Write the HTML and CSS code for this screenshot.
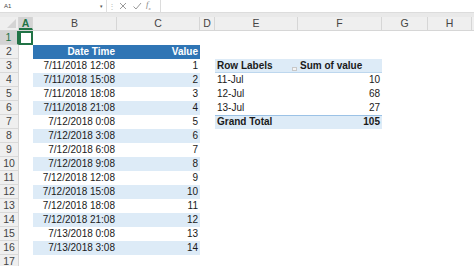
FILE: index.html
```html
<!DOCTYPE html>
<html>
<head>
<meta charset="utf-8">
<link rel="stylesheet" href="styles.css">
</head>
<body>
<div class="fbar">
  <div class="namebox"><span>A1</span><span class="dd">&#9662;</span></div>
  <div class="sep">&#8942;</div>
  <div class="icons">
    <svg width="10" height="10" viewBox="0 0 10 10"><path d="M2 2 L8 8 M8 2 L2 8" stroke="#9a9a9a" stroke-width="1"/></svg>
    <svg width="10" height="10" viewBox="0 0 10 10"><path d="M1.5 5.5 L4 8 L9 2" stroke="#9a9a9a" stroke-width="1" fill="none"/></svg>
    <span class="fx">f<sub>x</sub></span>
  </div>
  <div class="finput"></div>
</div>
<div class="gap"></div>
<div class="sheet">
  <div class="row hdr"><div class="corner"><span class="tri"></span></div><div class="ch act">A</div><div class="ch">B</div><div class="ch">C</div><div class="ch">D</div><div class="ch">E</div><div class="ch">F</div><div class="ch">G</div><div class="ch">H</div><div class="ch last"></div></div>
  <div class="row"><div class="rh act">1</div><div class="sel"></div><div></div><div></div><div></div><div></div><div></div><div></div><div></div><div></div></div>
  <div class="row"><div class="rh">2</div><div></div><div class="th">Date Time</div><div class="th">Value</div><div></div><div></div><div></div><div></div><div></div><div></div></div>
  <div class="row"><div class="rh">3</div><div></div><div class="num">7/11/2018 12:08</div><div class="num">1</div><div></div><div class="ph">Row Labels<span class="filt"></span></div><div class="ph">Sum of value</div><div></div><div></div><div></div></div>
  <div class="row"><div class="rh">4</div><div></div><div class="num band">7/11/2018 15:08</div><div class="num band">2</div><div></div><div class="pl">11-Jul</div><div class="num pv">10</div><div></div><div></div><div></div></div>
  <div class="row"><div class="rh">5</div><div></div><div class="num">7/11/2018 18:08</div><div class="num">3</div><div></div><div class="pl">12-Jul</div><div class="num pv">68</div><div></div><div></div><div></div></div>
  <div class="row"><div class="rh">6</div><div></div><div class="num band">7/11/2018 21:08</div><div class="num band">4</div><div></div><div class="pl">13-Jul</div><div class="num pv">27</div><div></div><div></div><div></div></div>
  <div class="row"><div class="rh">7</div><div></div><div class="num">7/12/2018 0:08</div><div class="num">5</div><div></div><div class="gt">Grand Total</div><div class="gt num">105</div><div></div><div></div><div></div></div>
  <div class="row"><div class="rh">8</div><div></div><div class="num band">7/12/2018 3:08</div><div class="num band">6</div><div></div><div></div><div></div><div></div><div></div><div></div></div>
  <div class="row"><div class="rh">9</div><div></div><div class="num">7/12/2018 6:08</div><div class="num">7</div><div></div><div></div><div></div><div></div><div></div><div></div></div>
  <div class="row"><div class="rh">10</div><div></div><div class="num band">7/12/2018 9:08</div><div class="num band">8</div><div></div><div></div><div></div><div></div><div></div><div></div></div>
  <div class="row"><div class="rh">11</div><div></div><div class="num">7/12/2018 12:08</div><div class="num">9</div><div></div><div></div><div></div><div></div><div></div><div></div></div>
  <div class="row"><div class="rh">12</div><div></div><div class="num band">7/12/2018 15:08</div><div class="num band">10</div><div></div><div></div><div></div><div></div><div></div><div></div></div>
  <div class="row"><div class="rh">13</div><div></div><div class="num">7/12/2018 18:08</div><div class="num">11</div><div></div><div></div><div></div><div></div><div></div><div></div></div>
  <div class="row"><div class="rh">14</div><div></div><div class="num band">7/12/2018 21:08</div><div class="num band">12</div><div></div><div></div><div></div><div></div><div></div><div></div></div>
  <div class="row"><div class="rh">15</div><div></div><div class="num">7/13/2018 0:08</div><div class="num">13</div><div></div><div></div><div></div><div></div><div></div><div></div></div>
  <div class="row"><div class="rh">16</div><div></div><div class="num band">7/13/2018 3:08</div><div class="num band">14</div><div></div><div></div><div></div><div></div><div></div><div></div></div>
  <div class="row"><div class="rh">17</div><div></div><div></div><div></div><div></div><div></div><div></div><div></div><div></div><div></div></div>
</div>
</body>
</html>
```

FILE: styles.css
```css
html, body {
  margin: 0;
  padding: 0;
  background: #ffffff;
  width: 474px;
  height: 266px;
  overflow: hidden;
  font-family: "Liberation Sans", Arial, sans-serif;
  font-size: 10px;
  color: #1a1a1a;
}

.fbar {
  display: flex;
  align-items: center;
  height: 13px;
  background: #ffffff;
  border-bottom: 1px solid #dcdcdc;
  box-sizing: border-box;
}

.namebox {
  width: 107px;
  height: 13px;
  display: flex;
  align-items: center;
  justify-content: space-between;
  padding: 0 3px 0 4px;
  box-sizing: border-box;
  font-size: 6px;
  color: #444;
  border-right: 1px solid #e0e0e0;
}

.namebox .dd {
  font-size: 5px;
  color: #555;
}

.sep {
  width: 10px;
  text-align: center;
  color: #bbb;
  font-size: 8px;
}

.icons {
  display: flex;
  align-items: center;
  gap: 4px;
  width: 42px;
  padding-left: 1px;
}

.fx {
  font-family: "Liberation Serif", serif;
  font-style: italic;
  font-size: 9px;
  color: #888;
  line-height: 10px;
}

.fx sub {
  font-size: 5px;
}

.finput {
  flex: 1;
  height: 13px;
  border-left: 1px solid #dcdcdc;
}

.gap {
  height: 4px;
  background: #e9e9e9;
}

.sheet {
  display: flex;
  flex-direction: column;
}

.row {
  display: grid;
  grid-template-columns: 19px 14px 84px 83px 15px 83px 84px 46px 44px 1fr;
  height: 14px;
  line-height: 14px;
}

.row > div {
  white-space: nowrap;
  overflow: hidden;
  box-sizing: border-box;
}

.hdr {
  background: #efefef;
  border-bottom: 1px solid #d6d6d6;
  box-sizing: border-box;
  line-height: 13px;
}

.corner {
  position: relative;
  border-right: 1px solid #d6d6d6;
}

.tri {
  position: absolute;
  right: 2px;
  bottom: 2px;
  width: 0;
  height: 0;
  border-left: 9px solid transparent;
  border-bottom: 9px solid #d4d4d4;
}

.ch {
  text-align: center;
  color: #444;
  font-size: 10.5px;
  border-right: 1px solid #d6d6d6;
}

.ch.last {
  border-right: none;
}

.ch.act {
  background: #d3d3d3;
  color: #217346;
  font-weight: bold;
  border-bottom: 2px solid #217346;
}

.rh {
  text-align: center;
  color: #444;
  background: #efefef;
  border-right: 1px solid #d6d6d6;
  border-bottom: 1px solid #d9d9d9;
  font-size: 10.5px;
  line-height: 13px;
}

.rh.act {
  background: #d3d3d3;
  color: #217346;
  border-right: 2px solid #217346;
}

.sel {
  border: 1px solid #217346;
  box-shadow: inset 0 0 0 1px #217346;
}

.th {
  background: #2f75b5;
  color: #ffffff;
  font-weight: bold;
  text-align: right;
  padding-right: 2px;
}

.num {
  text-align: right;
  padding-right: 2px;
}

.band {
  background: #ddebf7;
}

.ph {
  background: #ddebf7;
  font-weight: bold;
  padding-left: 2px;
  position: relative;
  border-bottom: 1px solid #bdd7ee;
}

.filt {
  position: absolute;
  right: 1px;
  top: 8px;
  width: 5px;
  height: 4px;
  background: #f4f4f4;
  border: 1px solid #c8c8c8;
  box-sizing: border-box;
}

.pl {
  padding-left: 2px;
}

.gt {
  background: #ddebf7;
  font-weight: bold;
  padding-left: 2px;
  border-top: 1px solid #9bc2e6;
  line-height: 12px;
}

.gt.num {
  padding-left: 0;
}
```
